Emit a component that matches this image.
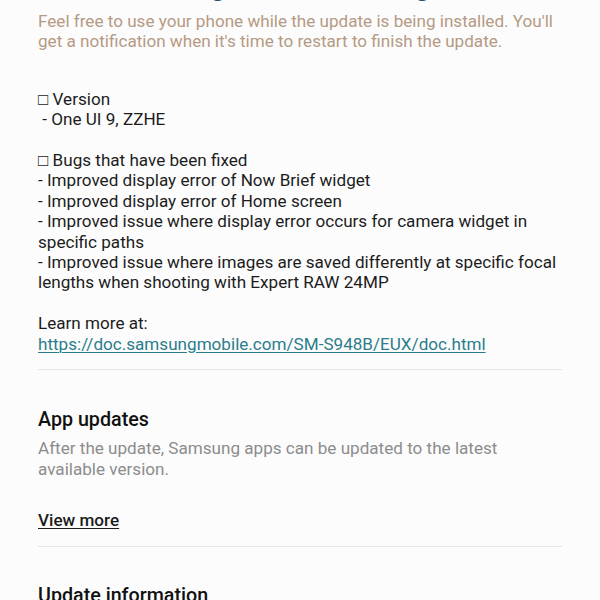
import React from "react";

export default function App() {
  return (
    <div
      className="w-[600px] h-[600px] overflow-hidden bg-[#fcfcfc] text-[#1c1c1c]"
      style={{ fontFamily: "Roboto, 'Liberation Sans', sans-serif" }}
    >
      <div className="px-[38px]">
        {/* Title, mostly scrolled out of view */}
        <h1 className="-mt-[36px] text-[32.5px] leading-[38px] font-bold text-[#1d5766] whitespace-nowrap">
          Downloading and installing
        </h1>

        <p className="mt-[9px] text-[17.1px] leading-[20.4px] text-[#b59a84]">
          Feel free to use your phone while the update is being installed. You'll
          <br />
          get a notification when it's time to restart to finish the update.
        </p>

        {/* Release notes */}
        <div className="mt-[37px] text-[17.1px] leading-[20.4px]">
          <p>□ Version</p>
          <p>&nbsp;- One UI 9, ZZHE</p>
          <p>&nbsp;</p>
          <p>□ Bugs that have been fixed</p>
          <p>- Improved display error of Now Brief widget</p>
          <p>- Improved display error of Home screen</p>
          <p>- Improved issue where display error occurs for camera widget in</p>
          <p>specific paths</p>
          <p>- Improved issue where images are saved differently at specific focal</p>
          <p>lengths when shooting with Expert RAW 24MP</p>
          <p>&nbsp;</p>
          <p>Learn more at:</p>
          <a
            href="#"
            className="text-[#2b7d8c] underline underline-offset-2 decoration-1"
          >
            https://doc.samsungmobile.com/SM-S948B/EUX/doc.html
          </a>
        </div>

        <div className="mt-[15px] h-px bg-[#e6e6e6]" />

        {/* App updates */}
        <section className="mt-[37px]">
          <h2 className="text-[19.7px] leading-[26px] font-medium text-[#111]">
            App updates
          </h2>
          <p className="mt-[5px] text-[17.1px] leading-[20.4px] text-[#8c8c8c]">
            After the update, Samsung apps can be updated to the latest
            <br />
            available version.
          </p>
          <a
            href="#"
            className="block mt-[31px] w-fit text-[17.1px] leading-[20.4px] font-medium text-[#1c1c1c] underline underline-offset-2 decoration-1"
          >
            View more
          </a>
        </section>

        <div className="mt-[16px] h-px bg-[#e6e6e6]" />

        <section className="mt-[36px]">
          <h2 className="text-[19.7px] leading-[26px] font-medium text-[#111]">
            Update information
          </h2>
        </section>
      </div>
    </div>
  );
}
